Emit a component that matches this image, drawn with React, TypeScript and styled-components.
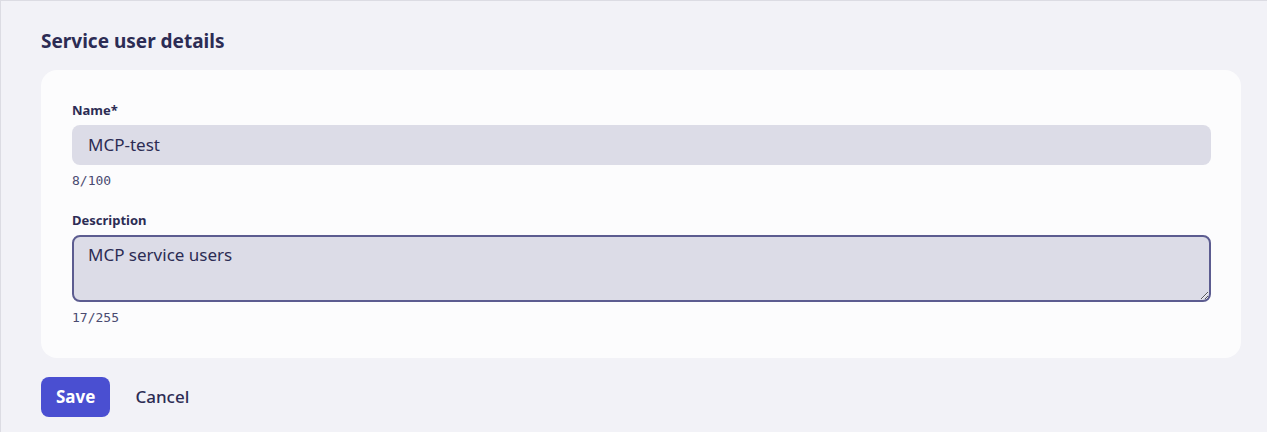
import React, { useEffect, useRef, useState } from "react";
import styled, { createGlobalStyle } from "styled-components";

const GlobalStyle = createGlobalStyle`
  html, body {
    margin: 0;
    padding: 0;
    background: #f2f2f7;
  }
  body {
    font-family: "Noto Sans", "Open Sans", sans-serif;
    color: #2c2c54;
  }
`;

const Page = styled.div`
  box-sizing: border-box;
  width: 1267px;
  height: 432px;
  border-top: 1px solid #dcdce3;
  border-left: 1px solid #dcdce3;
  padding: 21px 26px 0 40px;
  background: #f2f2f7;
`;

const Title = styled.h2`
  margin: 0;
  font-size: 19px;
  line-height: 38px;
  font-weight: 700;
  color: #2c2c54;
`;

const Card = styled.div`
  margin-top: 10px;
  background: #fcfcfd;
  border-radius: 16px;
  padding: 31px 30px 31px 31px;
`;

const Field = styled.div`
  display: flex;
  flex-direction: column;
  & + & {
    margin-top: 21px;
  }
`;

const Label = styled.label`
  font-size: 13px;
  font-weight: 700;
  line-height: 18px;
  margin-bottom: 6px;
  color: #2c2c54;
`;

const TextInput = styled.input`
  box-sizing: border-box;
  height: 40px;
  width: 100%;
  border: none;
  outline: none;
  border-radius: 8px;
  background: #dcdce7;
  padding: 0 16px 1px;
  font-family: inherit;
  font-size: 17px;
  color: #2c2c54;
`;

const TextArea = styled.textarea`
  box-sizing: border-box;
  height: 67px;
  width: 100%;
  border: 2px solid #5c5c90;
  outline: none;
  border-radius: 8px;
  background: #dcdce7;
  padding: 7px 14px;
  font-family: inherit;
  font-size: 17px;
  line-height: 22px;
  color: #2c2c54;
  caret-color: #2c2c54;
  resize: vertical;
`;

const Counter = styled.span`
  margin-top: 7px;
  font-family: "DejaVu Sans Mono", monospace;
  font-size: 13px;
  line-height: 18px;
  color: #4a4a70;
`;

const Actions = styled.div`
  display: flex;
  align-items: center;
  gap: 25px;
  margin-top: 19px;
`;

const Button = styled.button<{ $primary?: boolean }>`
  height: 40px;
  border: none;
  border-radius: 8px;
  padding: 0 ${(p) => (p.$primary ? "15px" : "0")} 2px;
  font-family: inherit;
  font-size: 17px;
  font-weight: ${(p) => (p.$primary ? 700 : 500)};
  background: ${(p) => (p.$primary ? "#4a4fd1" : "transparent")};
  color: ${(p) => (p.$primary ? "#ffffff" : "#2c2c54")};
  cursor: pointer;
`;

export default function App() {
  const [name, setName] = useState("MCP-test");
  const [desc, setDesc] = useState("MCP service users");
  const areaRef = useRef<HTMLTextAreaElement>(null);

  useEffect(() => {
    const el = areaRef.current;
    if (el) {
      el.focus();
      el.setSelectionRange(el.value.length, el.value.length);
    }
  }, []);

  return (
    <>
      <GlobalStyle />
      <Page>
        <Title>Service user details</Title>
        <Card>
          <Field>
            <Label>Name*</Label>
            <TextInput value={name} onChange={(e) => setName(e.target.value)} />
            <Counter>{name.length}/100</Counter>
          </Field>
          <Field>
            <Label>Description</Label>
            <TextArea ref={areaRef} value={desc} onChange={(e) => setDesc(e.target.value)} />
            <Counter>{desc.length}/255</Counter>
          </Field>
        </Card>
        <Actions>
          <Button $primary>Save</Button>
          <Button>Cancel</Button>
        </Actions>
      </Page>
    </>
  );
}
